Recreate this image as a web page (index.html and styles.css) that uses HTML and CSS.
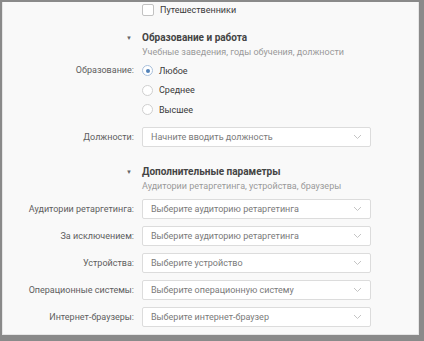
FILE: index.html
```html
<!DOCTYPE html>
<html lang="ru">
<head>
    <meta charset="UTF-8">
    <title>Параметры аудитории</title>
    <link rel="stylesheet" href="styles.css">
</head>
<body>
    <div class="frame">
        <div class="panel">
            <!-- Интересы (хвост предыдущего блока) -->
            <div class="row check-row">
                <div class="label"></div>
                <label class="check"><span class="box"></span>Путешественники</label>
            </div>

            <!-- Образование и работа -->
            <div class="row section-head">
                <div class="label"><span class="arrow">&#9660;</span></div>
                <div>
                    <div class="title">Образование и работа</div>
                    <div class="subtitle">Учебные заведения, годы обучения, должности</div>
                </div>
            </div>

            <div class="row radios">
                <div class="label">Образование:</div>
                <div>
                    <label class="radio checked"><span class="dot"></span>Любое</label>
                    <label class="radio"><span class="dot"></span>Среднее</label>
                    <label class="radio"><span class="dot"></span>Высшее</label>
                </div>
            </div>

            <div class="row field first-field">
                <div class="label">Должности:</div>
                <div class="select">Начните вводить должность
                    <svg class="chevron" width="9" height="6" viewBox="0 0 9 6"><path d="M1 1l3.5 3.5L8 1" fill="none" stroke="#c4c4c4" stroke-width="1"/></svg>
                </div>
            </div>

            <!-- Дополнительные параметры -->
            <div class="row section-head second">
                <div class="label"><span class="arrow">&#9660;</span></div>
                <div>
                    <div class="title">Дополнительные параметры</div>
                    <div class="subtitle">Аудитории ретаргетинга, устройства, браузеры</div>
                </div>
            </div>

            <div class="fields">
                <div class="row field">
                    <div class="label">Аудитории ретаргетинга:</div>
                    <div class="select">Выберите аудиторию ретаргетинга
                        <svg class="chevron" width="9" height="6" viewBox="0 0 9 6"><path d="M1 1l3.5 3.5L8 1" fill="none" stroke="#c4c4c4" stroke-width="1"/></svg>
                    </div>
                </div>
                <div class="row field">
                    <div class="label">За исключением:</div>
                    <div class="select">Выберите аудиторию ретаргетинга
                        <svg class="chevron" width="9" height="6" viewBox="0 0 9 6"><path d="M1 1l3.5 3.5L8 1" fill="none" stroke="#c4c4c4" stroke-width="1"/></svg>
                    </div>
                </div>
                <div class="row field">
                    <div class="label">Устройства:</div>
                    <div class="select">Выберите устройство
                        <svg class="chevron" width="9" height="6" viewBox="0 0 9 6"><path d="M1 1l3.5 3.5L8 1" fill="none" stroke="#c4c4c4" stroke-width="1"/></svg>
                    </div>
                </div>
                <div class="row field">
                    <div class="label">Операционные системы:</div>
                    <div class="select">Выберите операционную систему
                        <svg class="chevron" width="9" height="6" viewBox="0 0 9 6"><path d="M1 1l3.5 3.5L8 1" fill="none" stroke="#c4c4c4" stroke-width="1"/></svg>
                    </div>
                </div>
                <div class="row field">
                    <div class="label">Интернет-браузеры:</div>
                    <div class="select">Выберите интернет-браузер
                        <svg class="chevron" width="9" height="6" viewBox="0 0 9 6"><path d="M1 1l3.5 3.5L8 1" fill="none" stroke="#c4c4c4" stroke-width="1"/></svg>
                    </div>
                </div>
            </div>
        </div>
    </div>
</body>
</html>
```

FILE: styles.css
```css
:root {
    --frame-color: #8a8a8a;
    --panel-color: #f9f9f9;
    --text-color: #3a3a3a;
    --label-color: #5e5e5e;
    --muted-color: #9a9a9a;
    --border-color: #dcdcdc;
    --blue: #5181b8;
}

html, body {
    margin: 0;
    height: 100%;
}

body {
    font-family: Roboto, Arial, sans-serif;
    font-size: 9px;
    color: var(--text-color);
    background-color: var(--frame-color);
    overflow: hidden;
}

.frame {
    padding: 2px 5px 6px 2px;
    height: 100%;
    box-sizing: border-box;
}

.panel {
    height: 100%;
    box-sizing: border-box;
    background-color: var(--panel-color);
    border: 1px solid #e6e6e6;
    border-top: none;
}

.row {
    display: grid;
    grid-template-columns: 131px 229px;
    column-gap: 8px;
    white-space: nowrap;
}

.label {
    text-align: right;
    color: var(--label-color);
}

.check-row {
    height: 16px;
    line-height: 16px;
}

.check {
    display: flex;
    align-items: center;
    gap: 6px;
    color: var(--text-color);
}

.check .box {
    width: 10px;
    height: 10px;
    border: 1px solid #c2c2c2;
    border-radius: 2px;
    background-color: white;
}

.section-head {
    margin-top: 13px;
    line-height: 14px;
}

.section-head.second {
    margin-top: 18px;
}

.arrow {
    font-size: 6px;
    color: #666;
    margin-right: 2px;
    vertical-align: 1px;
}

.title {
    font-weight: bold;
    font-size: 10px;
    color: #444;
}

.subtitle {
    color: var(--muted-color);
}

.radios {
    margin-top: 2px;
}

.radios .label {
    line-height: 19.5px;
}

.radio {
    display: flex;
    align-items: center;
    gap: 6px;
    height: 19.5px;
    color: var(--text-color);
}

.radio .dot {
    width: 9px;
    height: 9px;
    border: 1px solid #cfcfcf;
    border-radius: 50%;
    background-color: white;
    position: relative;
}

.radio.checked .dot {
    border-color: #a9c0dc;
}

.radio.checked .dot::after {
    content: "";
    position: absolute;
    left: 2.5px;
    top: 2.5px;
    width: 4px;
    height: 4px;
    border-radius: 50%;
    background-color: var(--blue);
}

.field {
    line-height: 20px;
}

.first-field {
    margin-top: 7.5px;
}

.fields {
    margin-top: 6px;
    display: flex;
    flex-direction: column;
    gap: 7px;
}

.select {
    height: 20px;
    box-sizing: border-box;
    border: 1px solid var(--border-color);
    border-radius: 2px;
    background-color: white;
    color: #7a7a7a;
    padding: 0 8px;
    line-height: 18px;
    display: flex;
    align-items: center;
    justify-content: space-between;
}

.chevron {
    flex-shrink: 0;
}
```
